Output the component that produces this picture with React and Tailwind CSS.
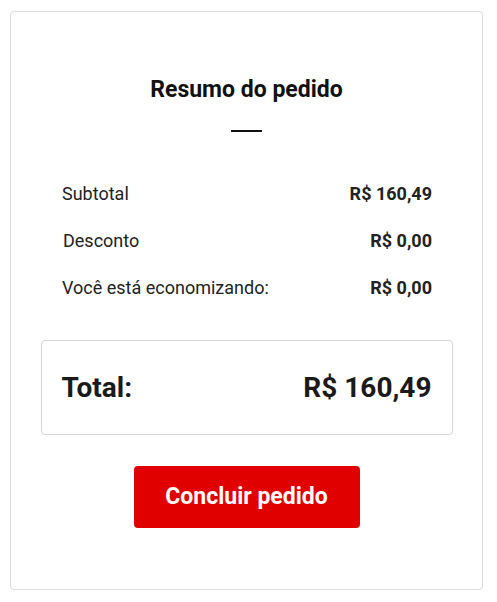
import React from 'react';

function Row({ label, value, labelClass = '' }) {
    return (
        <div className="flex justify-between items-center h-[24px]">
            <span className={`text-[18px] text-[#222] ${labelClass}`}>{label}</span>
            <span className="text-[18px] font-bold text-[#222]">{value}</span>
        </div>
    );
}

export default function App() {
    return (
        <div className="w-[497px] h-[602px] bg-white pt-[11px] pl-[10px] font-['Roboto',sans-serif]">
            <div className="w-[473px] h-[579px] border border-[#dcdcdc] rounded-[4px] flex flex-col items-center">
                <h2 className="mt-[64px] text-[23px] leading-[28px] font-bold text-[#111]">
                    Resumo do pedido
                </h2>
                <div className="mt-[26px] w-[31px] h-[2px] bg-[#111]" />
                <div className="mt-[49px] self-stretch pl-[51px] pr-[50px] flex flex-col gap-[23px]">
                    <Row label="Subtotal" value="R$ 160,49" />
                    <Row label="Desconto" value="R$ 0,00" labelClass="ml-[1px]" />
                    <Row label="Você está economizando:" value="R$ 0,00" />
                </div>
                <div className="mt-[41px] w-[412px] h-[95px] border border-[#d6d6d6] rounded-[4px] flex justify-between items-center pl-[20px] pr-[20px]">
                    <span className="text-[28px] font-bold text-[#1a1a1a]">Total:</span>
                    <span className="text-[28px] font-bold text-[#1a1a1a]">R$ 160,49</span>
                </div>
                <button className="mt-[31px] w-[226px] h-[62px] bg-[#e00000] rounded-[4px] text-white text-[23px] font-bold">
                    Concluir pedido
                </button>
            </div>
        </div>
    );
}
